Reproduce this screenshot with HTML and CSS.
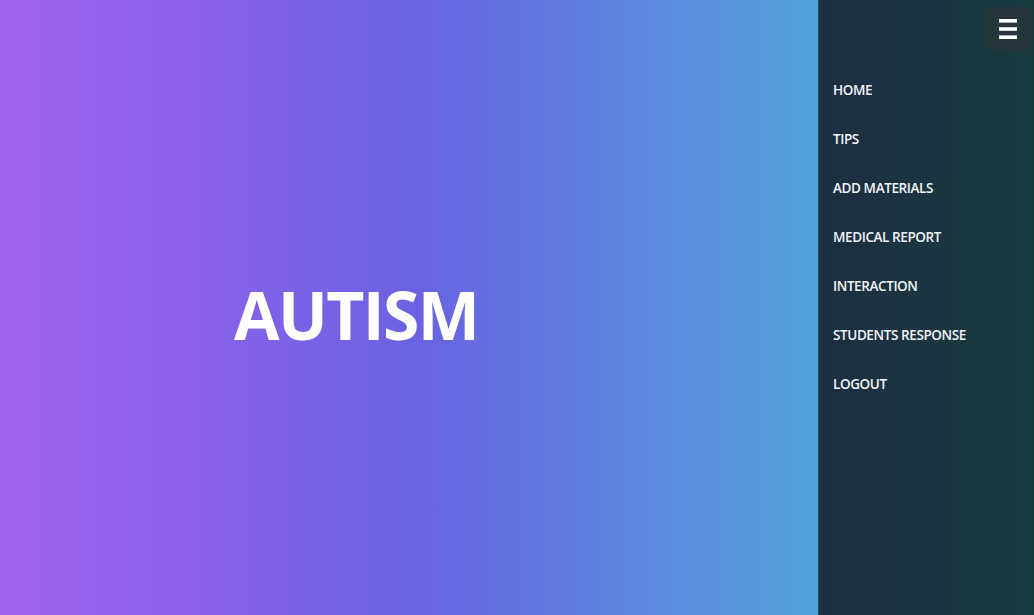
FILE: index.html
```html
<!DOCTYPE html>
<html>
<head>
<meta charset="utf-8">
<link rel="stylesheet" href="styles.css">
</head>
<body>
<div class="page">
  <main class="hero">
    <h1 class="title">AUTISM</h1>
  </main>
  <aside class="sidebar">
    <div class="top">
      <button class="menu-btn" aria-label="menu">
        <svg width="20" height="22" viewBox="0 0 20 22"><rect x="1" y="1" width="18" height="3.6" fill="#fff"/><rect x="1" y="9.2" width="18" height="3.6" fill="#fff"/><rect x="1" y="17.4" width="18" height="3.6" fill="#fff"/></svg>
      </button>
    </div>
    <nav class="nav">
      <a href="#">HOME</a>
      <a href="#">TIPS</a>
      <a href="#">ADD MATERIALS</a>
      <a href="#">MEDICAL REPORT</a>
      <a href="#">INTERACTION</a>
      <a href="#">STUDENTS RESPONSE</a>
      <a href="#">LOGOUT</a>
    </nav>
  </aside>
</div>
</body>
</html>
```
FILE: styles.css
```css
* { box-sizing: border-box; }
html, body { margin: 0; padding: 0; height: 100%; }
body { font-family: "Open Sans", "Liberation Sans", sans-serif; overflow: hidden; }
.page { display: flex; height: 615px; width: 1034px; }
.hero {
  flex: 0 0 818px;
  background: linear-gradient(90deg, #a062ee 0%, #8a61ea 25%, #6a62e2 50%, #5f7ce0 70%, #5a94dc 88%, #50a3da 100%);
  display: flex;
  align-items: center;
  padding-left: 234px;
}
.title {
  margin: 12px 0 0 0;
  color: #fff;
  font-size: 66px;
  font-weight: 700;
  letter-spacing: -1.6px;
}
.sidebar {
  flex: 1;
  background: linear-gradient(90deg, #1b2e43 0%, #1a3640 55%, #173c3e 100%);
  border-left: 1px solid #2a4a6a;
  display: flex;
  flex-direction: column;
}
.top { display: flex; justify-content: flex-end; padding: 7px 4px 0 0; }
.menu-btn {
  width: 44px; height: 44px;
  border: none;
  background: #26363d;
  display: flex; align-items: center; justify-content: center;
  padding: 0;
}
.nav { display: flex; flex-direction: column; padding: 29px 0 0 14px; }
.nav a {
  color: #f2f4f6;
  text-decoration: none;
  font-size: 13.5px;
  font-weight: 600;
  height: 49px;
  line-height: 20px;
  letter-spacing: -0.4px;
}
```
